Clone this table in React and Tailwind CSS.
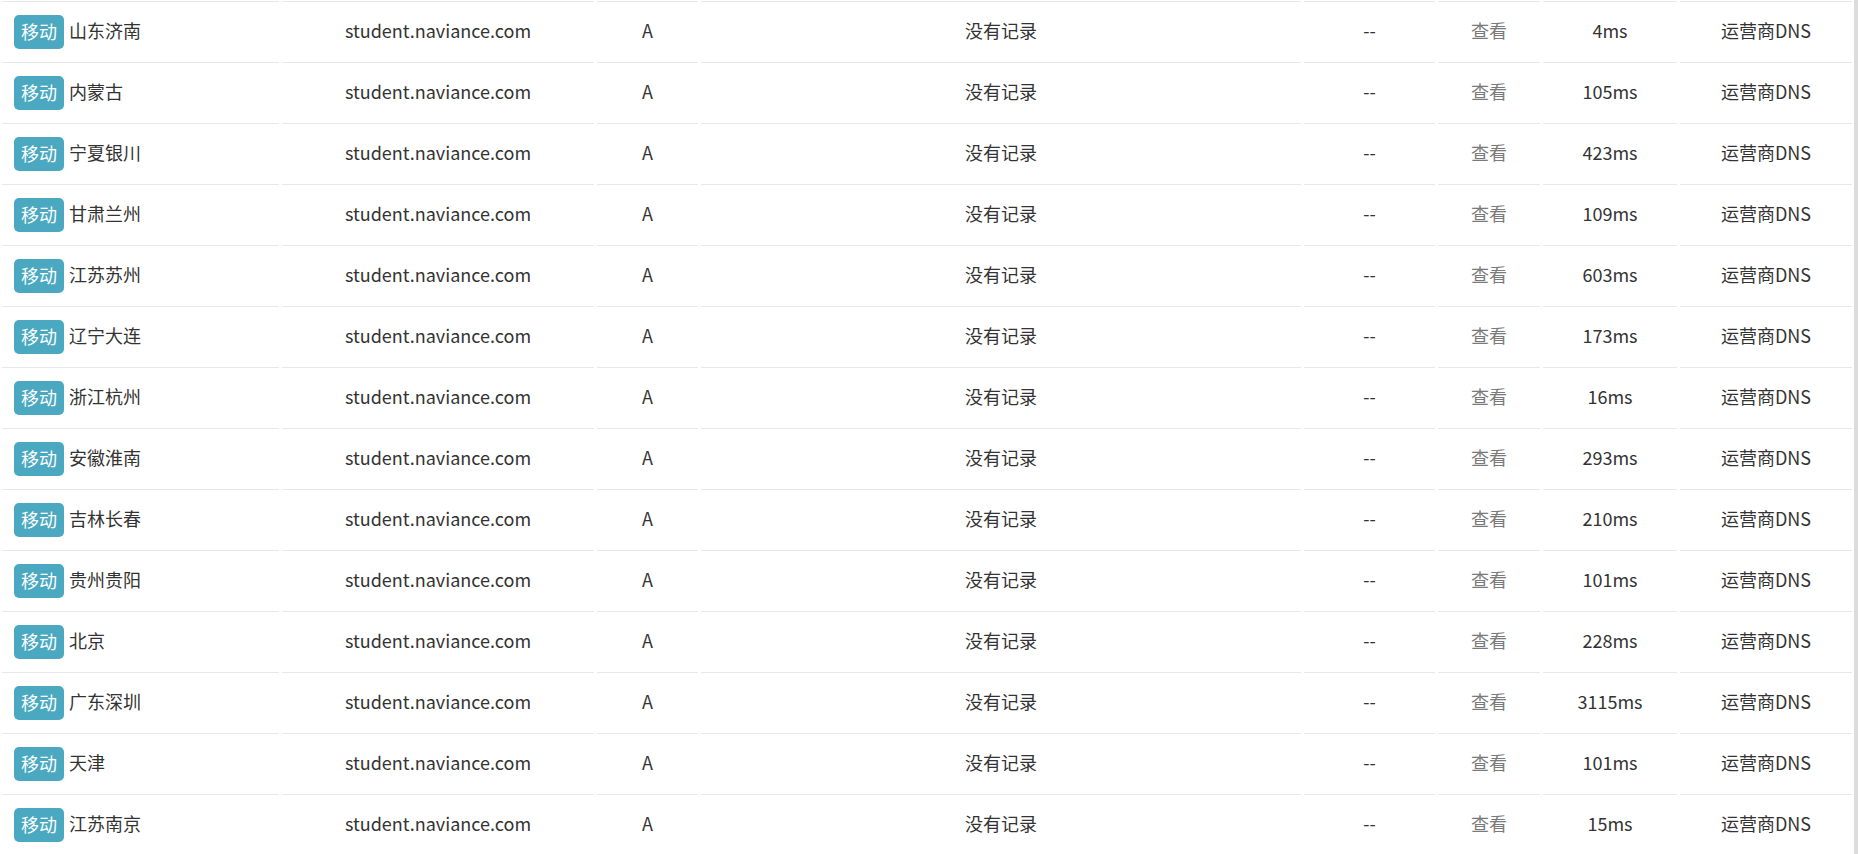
import React from "react";

const rows = [
  ["山东济南", "4ms"],
  ["内蒙古", "105ms"],
  ["宁夏银川", "423ms"],
  ["甘肃兰州", "109ms"],
  ["江苏苏州", "603ms"],
  ["辽宁大连", "173ms"],
  ["浙江杭州", "16ms"],
  ["安徽淮南", "293ms"],
  ["吉林长春", "210ms"],
  ["贵州贵阳", "101ms"],
  ["北京", "228ms"],
  ["广东深圳", "3115ms"],
  ["天津", "101ms"],
  ["江苏南京", "15ms"],
];

const cell = "h-[61px] border-t border-[#e6e9ec] flex items-center";

function T({ children, className = "" }) {
  return <span className={`block pb-[4px] ${className}`}>{children}</span>;
}

export default function App() {
  return (
    <div
      className="flex w-[1858px] h-[854px] overflow-hidden bg-white text-[18px] text-[#333]"
      style={{ fontFamily: '"Noto Sans CJK SC", "Microsoft YaHei", sans-serif' }}
    >
      <div className="flex-1 pl-[2px] pt-[1px]">
        {rows.map(([loc, ms], i) => (
          <div key={i} className="flex gap-[3px]">
            <div className={`${cell} w-[277px] pl-[12px]`}>
              <span className="inline-flex items-center justify-center w-[50px] h-[34px] rounded-[5px] bg-[#4aa9c1] text-white pb-[2px]">
                移动
              </span>
              <T className="ml-[5px]">{loc}</T>
            </div>
            <div className={`${cell} w-[312px] justify-center`}><T>student.naviance.com</T></div>
            <div className={`${cell} w-[101px] justify-center`}><T>A</T></div>
            <div className={`${cell} w-[600px] justify-center`}><T>没有记录</T></div>
            <div className={`${cell} w-[131px] justify-center`}><T>--</T></div>
            <div className={`${cell} w-[102px] justify-center text-[#7a7a7a]`}><T>查看</T></div>
            <div className={`${cell} w-[134px] justify-center`}><T>{ms}</T></div>
            <div className={`${cell} w-[172px] justify-center`}><T>运营商DNS</T></div>
          </div>
        ))}
      </div>
      <div className="w-[4px] h-full bg-[#dcdcdc]" />
    </div>
  );
}
